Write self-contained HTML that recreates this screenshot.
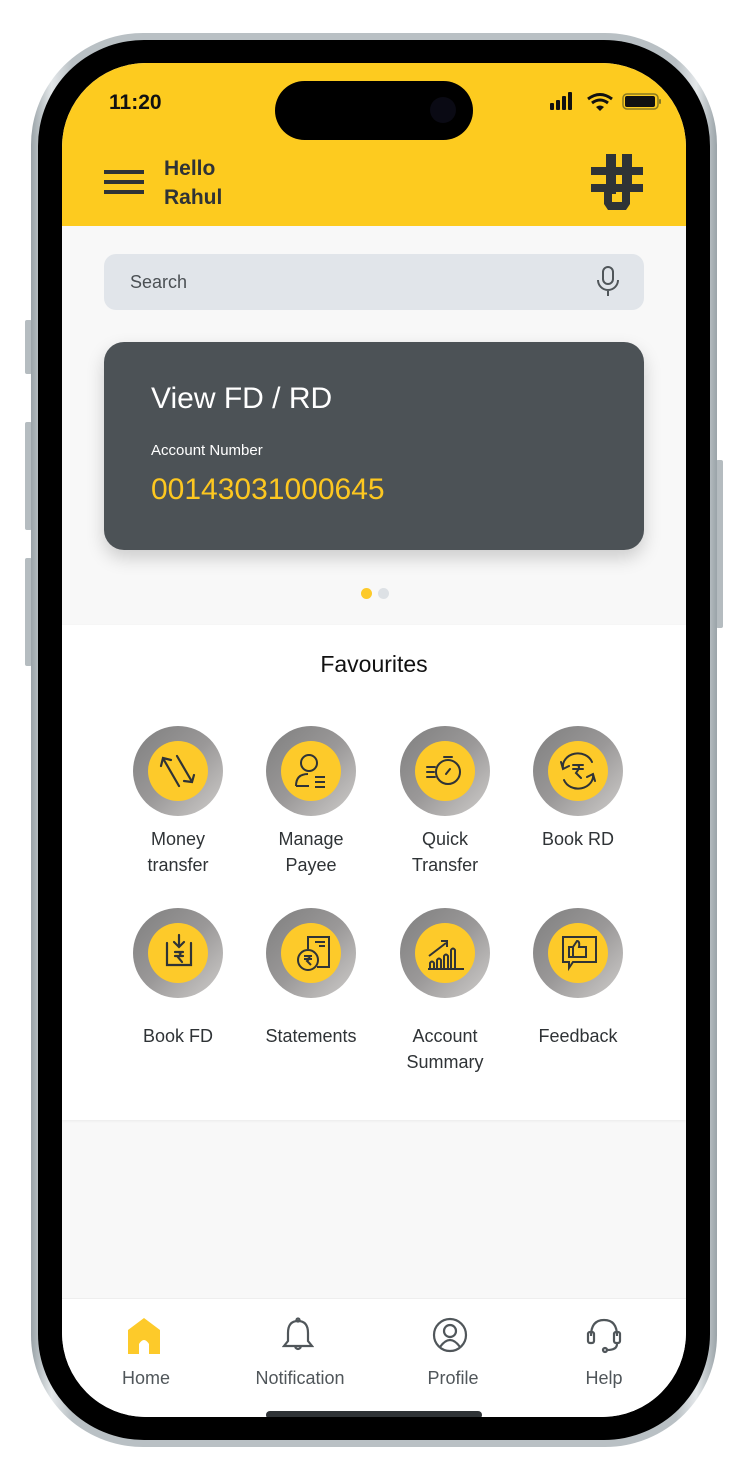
<!DOCTYPE html>
<html><head><meta charset="utf-8"><style>
*{margin:0;padding:0;box-sizing:border-box}
body{width:748px;height:1480px;background:#fff;position:relative;overflow:hidden;font-family:"Liberation Sans",sans-serif}
.abs{position:absolute}
.frame{left:31px;top:33px;width:686px;height:1414px;border-radius:112px;background:linear-gradient(90deg,#9aa3a8,#e4e8ea 3%,#b9c0c4 6%,#b9c0c4 94%,#e4e8ea 97%,#9aa3a8);}
.bezel{left:38px;top:40px;width:672px;height:1400px;border-radius:106px;background:#000}
.screen{left:62px;top:63px;width:624px;height:1354px;border-radius:84px;background:#f8f8f8;overflow:hidden}
.btn{background:#b5bcc0;border-radius:2px}
.fav{position:absolute;width:90px;height:90px;border-radius:50%;background:linear-gradient(135deg,#7f7f7f,#9a9898 50%,#cfcdcb)}
.fav .in{position:absolute;left:15px;top:15px;width:60px;height:60px;border-radius:50%;background:#fdca2a}
.fav svg{position:absolute;left:15px;top:15px}
.lbl{position:absolute;width:120px;text-align:center;font-size:18px;line-height:26px;color:#2f3336}
.nav{position:absolute;font-size:18px;color:#50565a;text-align:center;width:120px}
</style></head><body>
<div class="abs btn" style="left:25px;top:320px;width:7px;height:54px"></div>
<div class="abs btn" style="left:25px;top:422px;width:7px;height:108px"></div>
<div class="abs btn" style="left:25px;top:558px;width:7px;height:108px"></div>
<div class="abs btn" style="left:716px;top:460px;width:7px;height:168px"></div>
<div class="abs frame"></div>
<div class="abs bezel"></div>
<div class="abs screen">
 <div class="abs" style="left:0;top:0;width:624px;height:163px;background:#fdcb1f"></div>
 <div class="abs" style="left:47px;top:28px;font-size:21px;font-weight:bold;color:#111">11:20</div>
 <div class="abs" style="left:213px;top:18px;width:198px;height:59px;border-radius:30px;background:#000"></div>
 <div class="abs" style="left:368px;top:34px;width:26px;height:26px;border-radius:50%;background:#0a0a14"></div>
 <svg class="abs" style="left:488px;top:28px" width="120" height="22">
  <rect x="0" y="12" width="4" height="7" rx="1" fill="#111"/><rect x="6" y="9" width="4" height="10" rx="1" fill="#111"/><rect x="12" y="5" width="4" height="14" rx="1" fill="#111"/><rect x="18" y="1" width="4" height="18" rx="1" fill="#111"/>
  <path d="M38 8 Q50 -1 62 8" stroke="#111" stroke-width="3" fill="none"/><path d="M42 12 Q50 6 58 12" stroke="#111" stroke-width="3" fill="none"/><path d="M46 16 L50 20 L54 16 Q50 13 46 16Z" fill="#111"/>
  <rect x="73" y="3" width="35" height="15" rx="4" fill="none" stroke="#8a7a20" stroke-width="1.5"/><rect x="75" y="5" width="30" height="11" rx="2" fill="#111"/><rect x="109" y="8" width="2" height="5" rx="1" fill="#8a7a20"/>
 </svg>
 <div class="abs" style="left:42px;top:107px;width:40px;height:4px;background:#2f3336"></div>
 <div class="abs" style="left:42px;top:117px;width:40px;height:4px;background:#2f3336"></div>
 <div class="abs" style="left:42px;top:127px;width:40px;height:4px;background:#2f3336"></div>
 <div class="abs" style="left:102px;top:91px;font-size:21px;font-weight:bold;color:#2f3336;line-height:29px">Hello<br>Rahul</div>
 <svg class="abs" style="left:528px;top:91px" width="56" height="58">
  <g fill="#2f3336"><rect x="16" y="0" width="10" height="40"/><rect x="32" y="0" width="10" height="30"/><rect x="1" y="13" width="52" height="8"/><rect x="1" y="30" width="52" height="8"/><path d="M14 38h8v10h10V38h8v12l-4 6H18l-4-6Z"/></g>
 </svg>
 <div class="abs" style="left:42px;top:191px;width:540px;height:56px;border-radius:12px;background:#e1e5ea"></div>
 <div class="abs" style="left:68px;top:209px;font-size:18px;color:#4b5054">Search</div>
 <svg class="abs" style="left:534px;top:203px" width="24" height="32"><rect x="7" y="1" width="10" height="17" rx="5" fill="none" stroke="#50565a" stroke-width="2"/><path d="M2 14a10 10 0 0 0 20 0M12 24v6" fill="none" stroke="#50565a" stroke-width="2"/></svg>
 <div class="abs" style="left:42px;top:279px;width:540px;height:208px;border-radius:20px;background:#4c5256;box-shadow:0 8px 18px rgba(0,0,0,.18)"></div>
 <div class="abs" style="left:89px;top:319px;font-size:30px;color:#fff">View FD / RD</div>
 <div class="abs" style="left:89px;top:379px;font-size:15px;color:#fff">Account Number</div>
 <div class="abs" style="left:89px;top:410px;font-size:30px;color:#fdc720">00143031000645</div>
 <div class="abs" style="left:299px;top:525px;width:11px;height:11px;border-radius:50%;background:#fdca2a"></div>
 <div class="abs" style="left:316px;top:525px;width:11px;height:11px;border-radius:50%;background:#dde1e5"></div>
 <div class="abs" style="left:0;top:562px;width:624px;height:495px;background:#fff;box-shadow:0 1px 3px rgba(0,0,0,.06)"></div>
 <div class="abs" style="left:0;top:588px;width:624px;text-align:center;font-size:23px;color:#111">Favourites</div>

 <div class="fav" style="left:71px;top:663px"><div class="in"></div><svg width="60" height="60" fill="none" stroke="#2f3336" stroke-width="2.2" stroke-linecap="round"><path d="M31 45 L16 19 M13 25 L15 17 L23 19 M29 15 L43 39 M36 40 L44 41 L46 34"/></svg></div>
 <div class="fav" style="left:204px;top:663px"><div class="in"></div><svg width="60" height="60" fill="none" stroke="#2f3336" stroke-width="2"><circle cx="28" cy="22" r="8"/><path d="M15 45 Q15 33 27 33 M15 45 h13 M34 36h10 M34 41h10 M34 46h10"/></svg></div>
 <div class="fav" style="left:338px;top:663px"><div class="in"></div><svg width="60" height="60" fill="none" stroke="#2f3336" stroke-width="2" stroke-linecap="round"><circle cx="33" cy="31" r="12"/><path d="M29 16h8 M31 33l4-5 M12 26h8 M12 31h7 M12 36h8"/></svg></div>
 <div class="fav" style="left:471px;top:663px"><div class="in"></div><svg width="60" height="60" fill="none" stroke="#2f3336" stroke-width="2" stroke-linecap="round"><path d="M15 27a15 13 0 0 1 29-6 M45 33a15 13 0 0 1-29 6 M13 21l2 7 6-3 M47 40l-2-7-6 3 M25 24h10 M25 28h10 M28 24q6 0 0 8l5 5"/></svg></div>
 <div class="lbl" style="left:56px;top:763px">Money<br>transfer</div>
 <div class="lbl" style="left:189px;top:763px">Manage<br>Payee</div>
 <div class="lbl" style="left:323px;top:763px">Quick<br>Transfer</div>
 <div class="lbl" style="left:456px;top:763px">Book RD</div>

 <div class="fav" style="left:71px;top:845px"><div class="in"></div><svg width="60" height="60" fill="none" stroke="#2f3336" stroke-width="2.2" stroke-linecap="round"><path d="M19 20v22h24V20 M31 12v12 M26 19l5 5 5-5 M27 29h8 M27 33h8 M30 29q5 1 0 5l4 5"/></svg></div>
 <div class="fav" style="left:204px;top:845px"><div class="in"></div><svg width="60" height="60" fill="none" stroke="#2f3336" stroke-width="2"><path d="M27 26V14h21v30H36 M34 19h10 M38 23h6"/><circle cx="27" cy="37" r="10"/><path d="M23 33h8 M23 36h8 M26 33q5 1 0 5l4 4"/></svg></div>
 <div class="fav" style="left:338px;top:845px"><div class="in"></div><svg width="60" height="60" fill="none" stroke="#2f3336" stroke-width="2"><path d="M13 46h36 M15 46v-6q2-3 4 0v6 M22 46v-9q2-3 4 0v9 M29 46v-13q2-3 4 0v13 M36 46v-19q2-3 4 0v19 M14 33l17-13 M26 18h6v6"/></svg></div>
 <div class="fav" style="left:471px;top:845px"><div class="in"></div><svg width="60" height="60" fill="none" stroke="#2f3336" stroke-width="2"><path d="M15 14h33v25H25l-4 6v-6h-6Z M21 24h4v10h-4Z M25 24l4-6q3 0 2 6h7v10H25"/></svg></div>
 <div class="lbl" style="left:56px;top:960px">Book FD</div>
 <div class="lbl" style="left:183px;top:960px;width:132px">Statements</div>
 <div class="lbl" style="left:323px;top:960px">Account<br>Summary</div>
 <div class="lbl" style="left:456px;top:960px">Feedback</div>

 <div class="abs" style="left:0;top:1235px;width:624px;height:130px;background:#fff;border-top:1px solid #eee"></div>
 <svg class="abs" style="left:65px;top:1255px" width="36" height="36"><path d="M1 12L17 0L33 12V36H22V26q-5-8-10 0V36H1Z" fill="#fdca2a"/></svg>
 <svg class="abs" style="left:220px;top:1253px" width="32" height="40" fill="none" stroke="#50565a" stroke-width="2.2"><path d="M16 5q-10 0-10 12v8l-4 5h28l-4-5v-8q0-12-10-12Z M13 31q3 4 6 0"/><circle cx="16" cy="4" r="1.5"/></svg>
 <svg class="abs" style="left:370px;top:1253px" width="36" height="38" fill="none" stroke="#50565a" stroke-width="2.2"><circle cx="18" cy="19" r="16"/><circle cx="18" cy="15" r="6"/><path d="M8 31q10-14 20 0"/></svg>
 <svg class="abs" style="left:524px;top:1253px" width="36" height="40" fill="none" stroke="#50565a" stroke-width="2.2"><path d="M5 20q0-16 13-16t13 16"/><rect x="2" y="16" width="6" height="11" rx="2"/><rect x="28" y="16" width="6" height="11" rx="2"/><path d="M31 28q0 6-10 6"/><circle cx="19" cy="34" r="2"/></svg>
 <div class="nav" style="left:24px;top:1305px">Home</div>
 <div class="nav" style="left:178px;top:1305px">Notification</div>
 <div class="nav" style="left:331px;top:1305px">Profile</div>
 <div class="nav" style="left:482px;top:1305px">Help</div>
 <div class="abs" style="left:204px;top:1348px;width:216px;height:8px;border-radius:4px;background:#2f3336"></div>
</div>
</body></html>
